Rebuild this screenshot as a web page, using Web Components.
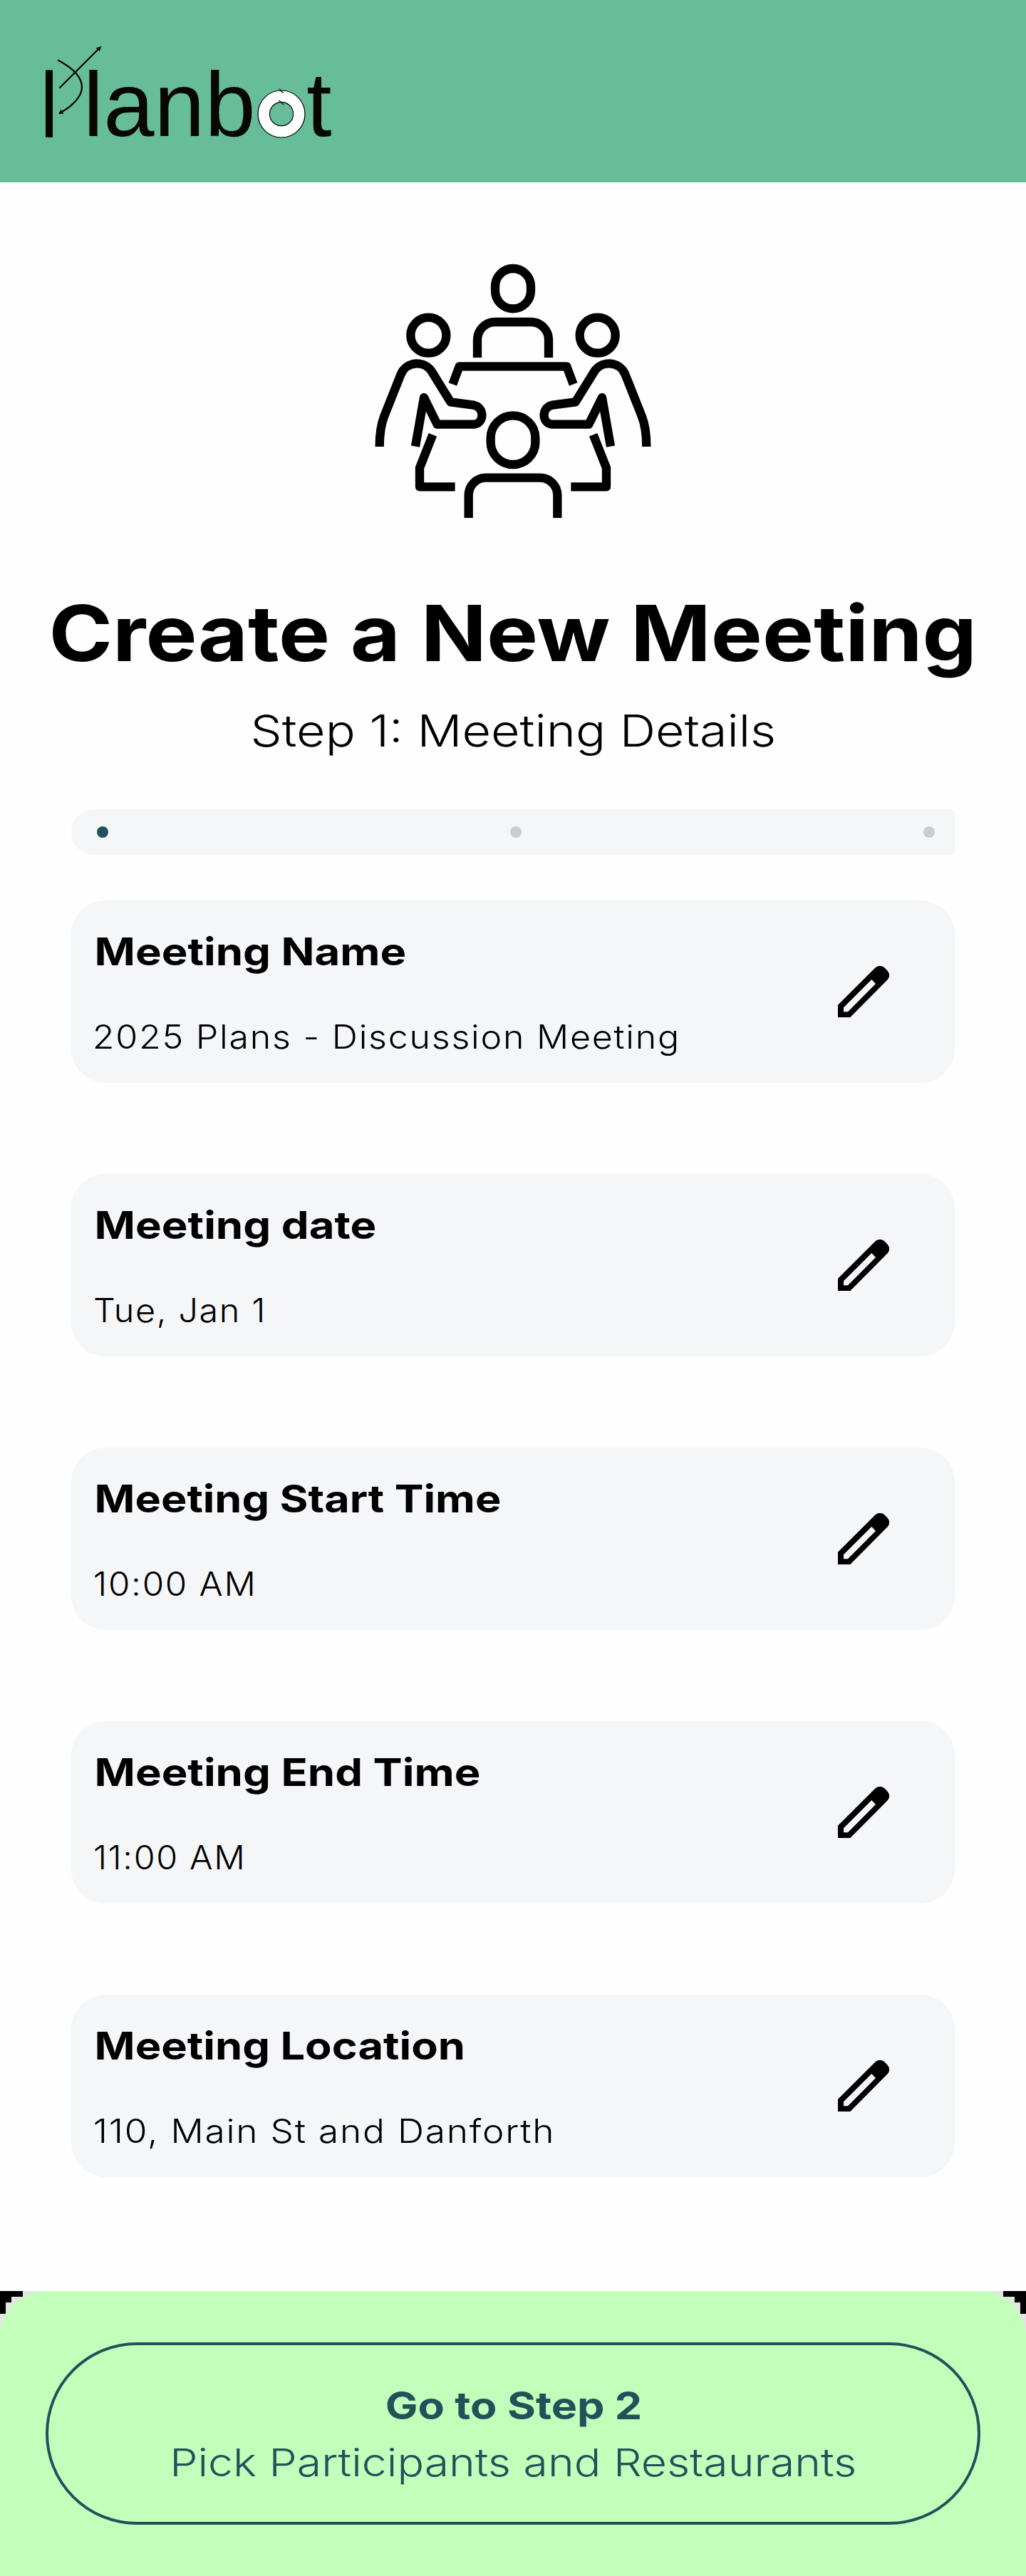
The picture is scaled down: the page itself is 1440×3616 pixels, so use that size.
<!DOCTYPE html>
<html lang="en">
<head>
<meta charset="utf-8">
<title>Planbot - Create a New Meeting</title>
<style>
  html, body { margin: 0; padding: 0; background: #fefefe; }
  body { font-family: Inter, "Open Sans", sans-serif; color: #000; }
</style>
</head>
<body>
<planbot-app></planbot-app>
<script>
const define = (name, html, setup) => {
  const template = document.createElement('template');
  template.innerHTML = html;
  customElements.define(name, class extends HTMLElement {
    connectedCallback() {
      if (this.shadowRoot) return;
      this.attachShadow({ mode: 'open' }).append(template.content.cloneNode(true));
      if (setup) setup.call(this, this.shadowRoot);
    }
  });
};

/* One line of text whose visible glyphs span exactly the given width. */
const pen = document.createElement('canvas').getContext('2d');
define('fit-text', `
  <style>
    :host { display: flex; flex: none; }
    span { flex: none; white-space: pre; transform-origin: 0 50%; }
  </style>
  <span></span>`, function (root) {
  const span = root.querySelector('span');
  const width = Number(this.getAttribute('width'));
  span.textContent = this.getAttribute('text');
  const css = getComputedStyle(this);
  pen.font = `${css.fontWeight} ${css.fontSize} ${css.fontFamily}`;
  pen.letterSpacing = css.letterSpacing === 'normal' ? '0px' : css.letterSpacing;
  const m = pen.measureText(span.textContent);
  const ink = span.getBoundingClientRect().width + m.actualBoundingBoxLeft
    - (m.width - m.actualBoundingBoxRight);
  const scale = width / (ink || 1);
  this.style.width = width + 'px';
  span.style.transform = `scaleX(${scale}) translateX(${m.actualBoundingBoxLeft}px)`;
});

define('planbot-logo', `
  <style>:host { display: block; } svg { display: block; }</style>
  <svg width="520" height="256" viewBox="0 0 520 256" fill="none" stroke="#080602">
    <rect x="64" y="98.4" width="10" height="94.4" fill="#080602" stroke="none"/>
    <g stroke-width="2.3" stroke-linecap="round">
      <path d="M84 123 139 68"/>
      <path d="M82 84.7C105 97 115.300 110.500 115 123C114.500 136 101 149 86 157.500"/>
    </g>
    <path fill="#080602" stroke="none" d="M142.300 64.800 134.300 67.600 137.800 69.300 139.700 72.300ZM82 160 85.800 153 86.600 156.800 90 159.600Z"/>
    <g fill="#080602" stroke="none" font-family="Liberation Sans, Arial, sans-serif" font-size="128">
      <text x="116.700" y="191.200">lanb</text><text x="430" y="191.200">t</text>
    </g>
    <circle cx="395" cy="160" r="24.700" stroke="#fff" stroke-width="16"/>
    <circle cx="395" cy="160" r="33" stroke-width="1.200"/>
    <circle cx="395" cy="160" r="16.600" stroke-width="1.200"/>
    <path stroke-width="1.200" d="M392.200 124.500 395 128.500 397.800 130.500M391.500 141 395 144 397.800 147"/>
  </svg>`);

define('app-header', `
  <style>:host { display: block; height: 256px; background: #67bd99; }</style>
  <planbot-logo></planbot-logo>`);

define('meeting-icon', `
  <style>:host { display: block; } svg { display: block; }</style>
  <svg width="440" height="410" viewBox="0 0 1320 1230" fill="none" stroke="#000" stroke-width="37" stroke-linejoin="round">
    <rect x="585" y="111" width="150" height="169" rx="75"/>
    <path d="M510 486V410A75 75 0 0 1 585 336H735A75 75 0 0 1 810 410V486"/>
    <circle cx="304" cy="392" r="75"/><circle cx="1016" cy="392" r="75"/>
    <path d="M406 598 434 523H886L914 598"/>
    <g id="side">
      <path d="M98 861C98 805 105 765 118 732L188 556A74 74 0 0 1 320 548L397 673 495 686C542 696 540 767 492 767H341L285 654 249 860"/>
      <path d="M322 811 267 950V1030H416"/>
    </g>
    <use href="#side" transform="matrix(-1 0 0 1 1320 0)"/>
    <rect x="566" y="730" width="188" height="206" rx="94"/>
    <path d="M473 1161V1065A73 73 0 0 1 546 992H774A73 73 0 0 1 847 1065V1161"/>
  </svg>`);

define('page-intro', `
  <style>
    :host { display: flex; flex-direction: column; align-items: center; padding-top: 84px; }
    .title { margin: 71px 4px 0 0; font-size: 108px; line-height: 136px; font-weight: 700; }
    .step { margin: 30px 0 71px 1px; font-size: 61.6px; line-height: 78px; font-weight: 300; }
  </style>
  <meeting-icon></meeting-icon>
  <fit-text class="title" width="1291" text="Create a New Meeting"></fit-text>
  <fit-text class="step" width="731" text="Step 1: Meeting Details"></fit-text>`);

define('step-progress', `
  <style>
    :host { display: flex; align-items: center; justify-content: space-between; box-sizing: border-box;
      height: 64px; padding: 0 28px 0 36px; background: #f4f6f8; border-radius: 32px 6px 6px 32px; }
    i { width: 16px; height: 16px; border-radius: 50%; background: #cbccce; }
    .current { background: #20525a; }
  </style>
  <i class="current"></i><i></i><i></i>`);

define('edit-icon', `
  <style>:host { display: block; } svg { display: block; }</style>
  <svg width="72" height="72" viewBox="108 108 216 216">
    <path fill-rule="evenodd" d="M108 324V272L266 115Q285 100 304 115L317 128Q332 147 317 166L160 324ZM132 301H150L267 183 250 165 132 283Z"/>
  </svg>`);

define('detail-card', `
  <style>
    :host { display: flex; align-items: center; justify-content: space-between; box-sizing: border-box;
      height: 256px; padding: 0 92px 0 32px; background: #f4f6f8; border-radius: 48px; }
    .copy { align-self: flex-start; padding-top: 38px; }
    .label { margin-left: 4px; font-size: 54px; line-height: 68px; font-weight: 700; }
    .value { margin: 56px 0 0 1px; font-size: 46.2px; line-height: 58px; font-weight: 300; letter-spacing: 1.6px; }
  </style>
  <div class="copy"></div><edit-icon></edit-icon>`, function (root) {
  const copy = root.querySelector('.copy');
  for (const part of ['label', 'value']) {
    const line = document.createElement('fit-text');
    line.className = part;
    line.setAttribute('text', this.getAttribute(part));
    line.setAttribute('width', this.getAttribute(part + '-width'));
    copy.append(line);
  }
});

define('next-step', `
  <style>
    :host { display: flex; flex-direction: column; align-items: center; box-sizing: border-box;
      height: 256px; padding-top: 45px; border: 4px solid #20525a; border-radius: 128px;
      color: #20525a; font-size: 54px; line-height: 80px; }
    .go { font-weight: 700; margin-left: 1px; }
    .pick { font-weight: 300; margin-left: 2px; }
  </style>
  <fit-text class="go" width="356" text="Go to Step 2"></fit-text>
  <fit-text class="pick" width="955" text="Pick Participants and Restaurants"></fit-text>`);

define('app-footer', `
  <style>
    :host { display: grid; height: 400px; background: #e4e4e4; }
    .panel, .corners { grid-area: 1 / 1; }
    .panel { box-sizing: border-box; padding: 72px 64px; background: #c2ffba; border-radius: 64px 64px 0 0; }
    .corners { display: flex; justify-content: space-between; height: 32px; }
  </style>
  <div class="panel"><next-step></next-step></div>
  <div class="corners">
    <svg width="32" height="32"><path d="M0 0H32V8H16V16H8V32H0Z"/></svg>
    <svg width="32" height="32"><path d="M32 0H0V8H16V16H24V32H32Z"/></svg>
  </div>`);

define('planbot-app', `
  <style>
    :host { display: flex; flex-direction: column; width: 1440px; height: 3616px; overflow: hidden; }
    main { flex: 1; }
    .fields { display: flex; flex-direction: column; gap: 128px; padding: 64px 100px 0; }
    step-progress { margin: 0 100px; }
  </style>
  <app-header></app-header>
  <main>
    <page-intro></page-intro>
    <step-progress></step-progress>
    <div class="fields">
      <detail-card label="Meeting Name" label-width="433" value="2025 Plans - Discussion Meeting" value-width="816"></detail-card>
      <detail-card label="Meeting date" label-width="391" value="Tue, Jan 1" value-width="235"></detail-card>
      <detail-card label="Meeting Start Time" label-width="566" value="10:00 AM" value-width="222"></detail-card>
      <detail-card label="Meeting End Time" label-width="537" value="11:00 AM" value-width="207"></detail-card>
      <detail-card label="Meeting Location" label-width="514" value="110, Main St and Danforth" value-width="641"></detail-card>
    </div>
  </main>
  <app-footer></app-footer>`);
</script>
</body>
</html>
